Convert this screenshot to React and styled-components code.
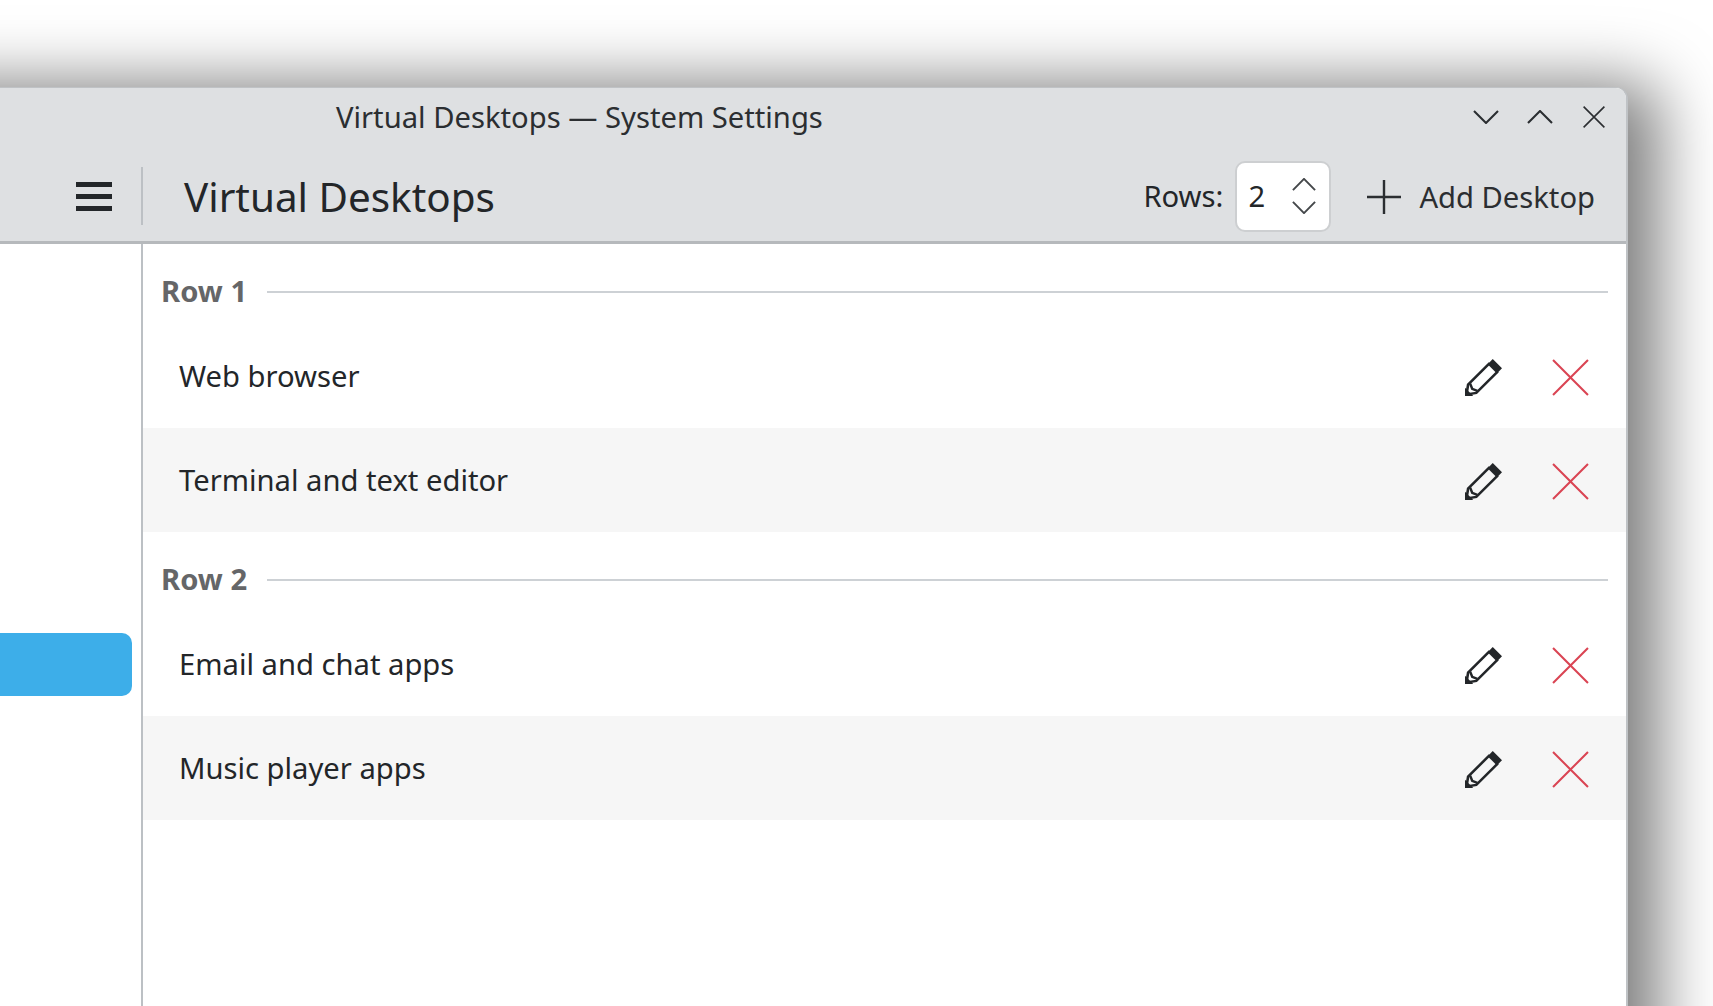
import React from "react";
import styled, { createGlobalStyle } from "styled-components";

const GlobalStyle = createGlobalStyle`
  html, body {
    margin: 0;
    height: 100%;
    background: #fff;
    overflow: hidden;
  }
  body {
    font-family: "Noto Sans", sans-serif;
    color: #232629;
  }
`;

const Page = styled.div`
  width: 1713px;
  height: 1006px;
  padding-top: 87px;
  box-sizing: border-box;
  overflow: hidden;
`;

/* the window runs past the left edge of the picture, so the shadow stays even there */
const Window = styled.div`
  width: 1748px;
  height: 1100px;
  margin-left: -120px;
  box-sizing: border-box;
  display: flex;
  flex-direction: column;
  background: #fff;
  border: solid #bfc2c5;
  border-width: 1px 2px 0 0;
  border-radius: 0 12px 0 0;
  box-shadow: 17px 10px 64px 15px rgba(0, 0, 0, 0.5);
`;

const Header = styled.header`
  height: 156px;
  flex: none;
  box-sizing: border-box;
  background: #dee0e2;
  border-bottom: 3px solid #b6b9bc;
  border-radius: 0 10px 0 0;
  display: flex;
  flex-direction: column;
`;

const TitleBar = styled.div`
  height: 58px;
  flex: none;
  display: flex;
  align-items: center;
  padding-right: 5px;
`;

const WindowTitle = styled.div`
  margin-left: 456px;
  flex: 1;
  font-size: 29.2px;
  color: #2b2e31;
`;

const TitleButton = styled.button`
  width: 54px;
  height: 34px;
  padding: 0;
  border: 0;
  background: none;
  display: flex;
  align-items: center;
  justify-content: center;
`;

const ToolBar = styled.div`
  flex: 1;
  display: flex;
  align-items: center;
  padding: 5px 31px 0 0;
`;

const MenuZone = styled.div`
  width: 261px;
  height: 58px;
  flex: none;
  box-sizing: border-box;
  padding-left: 196px;
  display: flex;
  align-items: center;
`;

const Burger = styled.div`
  width: 36px;
  height: 29px;
  display: flex;
  flex-direction: column;
  justify-content: space-between;
`;

const BurgerBar = styled.span`
  height: 5px;
  background: #232629;
`;

const VLine = styled.div`
  width: 2px;
  height: 58px;
  flex: none;
  background: #bcc0c4;
`;

const PageTitle = styled.h1`
  flex: 1;
  margin: 0 0 0 41px;
  font-size: 40.4px;
  font-weight: 400;
  color: #232629;
`;

const RowsLabel = styled.span`
  font-size: 29.2px;
  margin-right: 12px;
`;

const Spin = styled.div`
  width: 96px;
  height: 71px;
  box-sizing: border-box;
  background: #fff;
  border: 2px solid #cdcfd1;
  border-radius: 10px;
  display: flex;
  align-items: center;
  justify-content: space-between;
  padding: 0 13px 0 11px;
  font-size: 29.2px;
  margin-right: 36px;
`;

const SpinArrows = styled.div`
  display: flex;
  flex-direction: column;
  gap: 10px;
`;

const AddButton = styled.button`
  padding: 0;
  margin-top: 1px;
  border: 0;
  background: none;
  font: inherit;
  font-size: 29.2px;
  color: #2b2e31;
  display: flex;
  align-items: center;
  gap: 18px;
`;

const Body = styled.div`
  flex: 1;
  display: flex;
  min-height: 0;
`;

const Sidebar = styled.nav`
  width: 261px;
  flex: none;
  box-sizing: border-box;
  padding-top: 389px;
  padding-right: 9px;
`;

const ActiveItem = styled.div`
  height: 63px;
  background: #3daee9;
  border-radius: 0 10px 10px 0;
`;

const Content = styled.main`
  flex: 1;
  border-left: 2px solid #bcc0c4;
`;

const SectionHead = styled.div`
  height: 80px;
  box-sizing: border-box;
  padding: 14px 18px 0 18px;
  display: flex;
  align-items: center;
  gap: 20px;
`;

const SectionLabel = styled.span`
  font-size: 29.2px;
  font-weight: 700;
  color: #656668;
`;

const SectionLine = styled.span`
  flex: 1;
  height: 2px;
  margin-top: 2px;
  background: #cdd1d5;
`;

const Row = styled.div`
  height: 104px;
  box-sizing: border-box;
  padding: 0 37px 0 36px;
  display: flex;
  align-items: center;
  font-size: 29.2px;
  background: ${(p) => (p.$alt ? "#f6f6f6" : "#fff")};
`;

const RowName = styled.span`
  flex: 1;
`;

const RowActions = styled.div`
  display: flex;
  gap: 50px;
  margin-top: 2px;
`;

const Chevron = ({ up, size = 26, h = 14, color = "#2b2e31", w = 2.1 }) => (
  <svg width={size} height={h} viewBox="0 0 26 14" fill="none" stroke={color} strokeWidth={w} preserveAspectRatio="none">
    <path d={up ? "M1 13 L13 1 L25 13" : "M1 1 L13 13 L25 1"} />
  </svg>
);

const CloseX = ({ size, color, w }) => (
  <svg width={size} height={size} viewBox="0 0 36 36" fill="none" stroke={color} strokeWidth={w}>
    <path d="M1 1 L35 35 M35 1 L1 35" />
  </svg>
);

const Pencil = () => (
  <svg width="37" height="37" viewBox="0 0 36 36">
    <path d="M27 0 L36 9 L31 14 L22 5 Z" fill="#232629" />
    <path d="M24 4 L3 25 L1.5 34.5 L11 33 L32 12" fill="none" stroke="#232629" strokeWidth="2.5" />
    <path d="M5 24 L7 29 L12 31" fill="none" stroke="#232629" strokeWidth="2.4" />
    <path d="M0 28 L0 36 L8 36 Z" fill="#232629" />
  </svg>
);

const Plus = () => (
  <svg width="34" height="34" viewBox="0 0 34 34" stroke="#2b2e31" strokeWidth="2.4" fill="none">
    <path d="M17 0 V34 M0 17 H34" />
  </svg>
);

const sections = [
  { name: "Row 1", rows: ["Web browser", "Terminal and text editor"] },
  { name: "Row 2", rows: ["Email and chat apps", "Music player apps"] },
];

const App = () => {
  return (
    <Page>
      <GlobalStyle />
      <Window>
        <Header>
          <TitleBar>
            <WindowTitle>Virtual Desktops — System Settings</WindowTitle>
            <TitleButton><Chevron /></TitleButton>
            <TitleButton><Chevron up /></TitleButton>
            <TitleButton><CloseX size={22} color="#2b2e31" w={2.6} /></TitleButton>
          </TitleBar>
          <ToolBar>
            <MenuZone>
              <Burger>
                <BurgerBar />
                <BurgerBar />
                <BurgerBar />
              </Burger>
            </MenuZone>
            <VLine />
            <PageTitle>Virtual Desktops</PageTitle>
            <RowsLabel>Rows:</RowsLabel>
            <Spin>
              2
              <SpinArrows>
                <Chevron up size={24} h={13} color="#44474a" />
                <Chevron size={24} h={13} color="#44474a" />
              </SpinArrows>
            </Spin>
            <AddButton>
              <Plus />
              Add Desktop
            </AddButton>
          </ToolBar>
        </Header>
        <Body>
          <Sidebar>
            <ActiveItem />
          </Sidebar>
          <Content>
            {sections.map((s) => (
              <section key={s.name}>
                <SectionHead>
                  <SectionLabel>{s.name}</SectionLabel>
                  <SectionLine />
                </SectionHead>
                {s.rows.map((r, i) => (
                  <Row key={r} $alt={i === 1}>
                    <RowName>{r}</RowName>
                    <RowActions>
                      <Pencil />
                      <CloseX size={37} color="#da4453" w={2} />
                    </RowActions>
                  </Row>
                ))}
              </section>
            ))}
          </Content>
        </Body>
      </Window>
    </Page>
  );
};

export default App;
